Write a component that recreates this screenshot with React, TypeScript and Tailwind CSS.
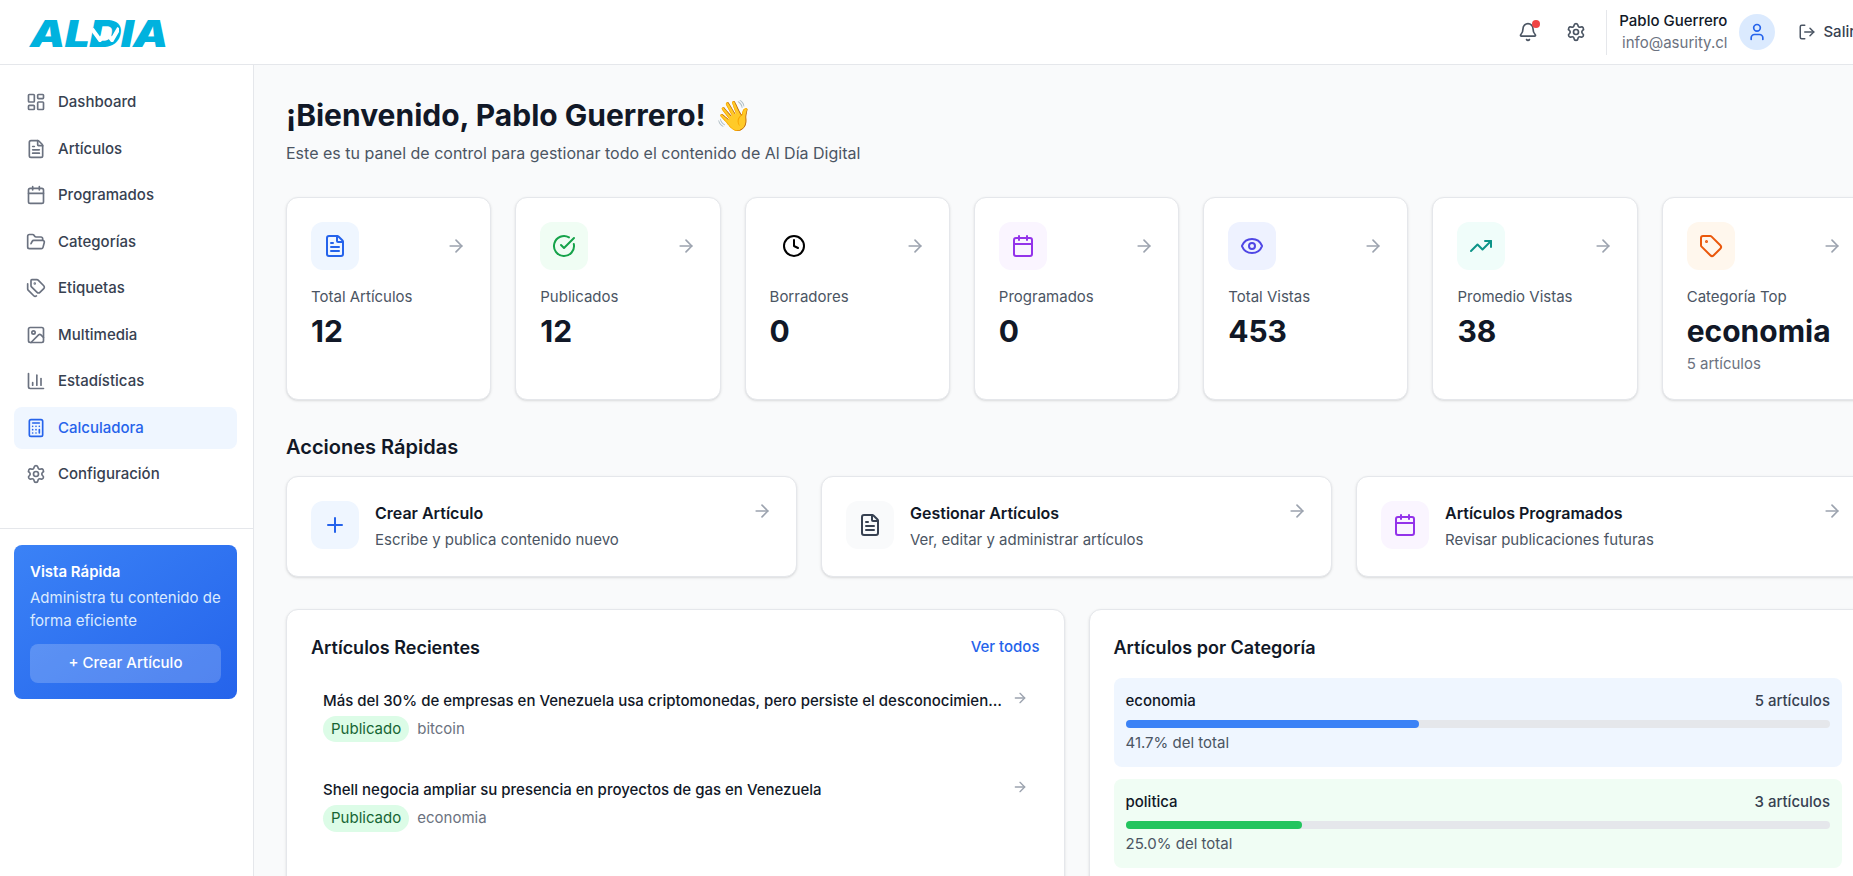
import {
  ArrowRight,
  Bell,
  Calculator,
  Calendar,
  ChartColumn,
  CircleCheckBig,
  Clock,
  Eye,
  FileText,
  FolderOpen,
  Image,
  LayoutDashboard,
  LogOut,
  Plus,
  Settings,
  Tag,
  Tags,
  TrendingUp,
  User,
} from "lucide-react";

const navItems = [
  { icon: LayoutDashboard, label: "Dashboard" },
  { icon: FileText, label: "Artículos" },
  { icon: Calendar, label: "Programados" },
  { icon: FolderOpen, label: "Categorías" },
  { icon: Tags, label: "Etiquetas" },
  { icon: Image, label: "Multimedia" },
  { icon: ChartColumn, label: "Estadísticas" },
  { icon: Calculator, label: "Calculadora", active: true },
  { icon: Settings, label: "Configuración" },
];

const stats = [
  { icon: FileText, box: "bg-[#eff6ff]", color: "text-[#2563eb]", label: "Total Artículos", value: "12" },
  { icon: CircleCheckBig, box: "bg-[#f0fdf4]", color: "text-[#16a34a]", label: "Publicados", value: "12" },
  { icon: Clock, box: "", color: "text-black", label: "Borradores", value: "0" },
  { icon: Calendar, box: "bg-[#faf5ff]", color: "text-[#9333ea]", label: "Programados", value: "0" },
  { icon: Eye, box: "bg-[#eef2ff]", color: "text-[#4f46e5]", label: "Total Vistas", value: "453" },
  { icon: TrendingUp, box: "bg-[#f0fdfa]", color: "text-[#0d9488]", label: "Promedio Vistas", value: "38" },
  { icon: Tag, box: "bg-[#fff7ed]", color: "text-[#ea580c]", label: "Categoría Top", value: "economia", sub: "5 artículos" },
];

const actions = [
  { icon: Plus, box: "bg-[#eff6ff]", color: "text-[#2563eb]", title: "Crear Artículo", text: "Escribe y publica contenido nuevo" },
  { icon: FileText, box: "bg-[#f9fafb]", color: "text-[#374151]", title: "Gestionar Artículos", text: "Ver, editar y administrar artículos" },
  { icon: Calendar, box: "bg-[#faf5ff]", color: "text-[#9333ea]", title: "Artículos Programados", text: "Revisar publicaciones futuras" },
];

const recent = [
  { title: "Más del 30% de empresas en Venezuela usa criptomonedas, pero persiste el desconocimiento sobre su uso real", tag: "bitcoin" },
  { title: "Shell negocia ampliar su presencia en proyectos de gas en Venezuela", tag: "economia" },
];

const categories = [
  { name: "economia", count: "5 artículos", pct: 41.7, box: "bg-[#eff6ff]", bar: "bg-[#3b82f6]" },
  { name: "politica", count: "3 artículos", pct: 25.0, box: "bg-[#f0fdf4]", bar: "bg-[#22c55e]" },
];

function Logo() {
  return (
    <div className="relative mt-[2px] h-[37px] w-[137px] text-[37px] leading-none font-black italic tracking-[-0.5px] text-[#00b2de] select-none">
      <span className="inline-block origin-left scale-x-[1.2]">ALDIA</span>
      <svg viewBox="0 0 28 16" className="absolute left-[61px] top-[11px] h-[16px] w-[28px]" fill="none">
        <path d="M1 3 L9 14 L15 6 L21 14 L28 2" stroke="#fff" strokeWidth="4" />
      </svg>
    </div>
  );
}

function Header() {
  return (
    <header className="flex h-[65px] shrink-0 items-center justify-between border-b border-[#e5e7eb] bg-white pr-8 pl-[30px]">
      <Logo />
      <div className="flex items-center gap-3">
        <button className="relative p-2 text-[#4b5563]">
          <Bell size={20} />
          <span className="absolute top-[6px] right-[6px] h-2 w-2 rounded-full bg-[#ef4444]" />
        </button>
        <button className="p-2 text-[#4b5563]">
          <Settings size={20} />
        </button>
        <div className="flex items-center gap-3 border-l border-[#e5e7eb] pl-3">
          <div className="text-right">
            <div className="text-[15px] font-medium text-[#111827]">Pablo Guerrero</div>
            <div className="text-[15px] text-[#6b7280]">info@asurity.cl</div>
          </div>
          <div className="flex h-9 w-9 items-center justify-center rounded-full bg-[#dbeafe] text-[#2563eb]">
            <User size={20} />
          </div>
        </div>
        <button className="flex items-center gap-[7px] py-2 pr-3 pl-[11px] text-[15px] font-medium text-[#374151]">
          <LogOut size={18} className="text-[#4b5563]" />
          Salir
        </button>
      </div>
    </header>
  );
}

function Sidebar() {
  return (
    <aside className="w-[254px] shrink-0 border-r border-[#e5e7eb] bg-white">
      <nav className="flex flex-col gap-1 border-b border-[#e5e7eb] pt-4 pr-4 pb-8 pl-3.5">
        {navItems.map((item) => (
          <a
            key={item.label}
            className={
              item.active
                ? "flex items-center gap-3 rounded-lg bg-[#eff6ff] px-3 py-2.5 text-[15px] font-medium text-[#2563eb]"
                : "flex items-center gap-3 rounded-lg px-3 py-2.5 text-[15px] font-medium text-[#374151]"
            }
          >
            <item.icon size={20} className={item.active ? "text-[#2563eb]" : "text-[#6b7280]"} />
            {item.label}
          </a>
        ))}
      </nav>
      <div className="pt-4 pr-4 pl-3.5">
        <div className="rounded-lg bg-gradient-to-br from-[#3b82f6] to-[#2563eb] p-4 text-white">
          <h3 className="text-[15px] font-semibold">Vista Rápida</h3>
          <p className="mt-1 text-[15px] text-[#dbeafe]">Administra tu contenido de forma eficiente</p>
          <button className="mt-3 w-full rounded-lg bg-white/20 py-2 text-[15px] font-medium">+ Crear Artículo</button>
        </div>
      </div>
    </aside>
  );
}

export default function App() {
  return (
    <div className="h-screen w-screen overflow-hidden">
      <div className="flex h-full w-[1899px] flex-col bg-[#f9fafb] font-['Inter',sans-serif]">
        <Header />
        <div className="flex min-h-0 flex-1">
          <Sidebar />
          <main className="min-w-0 flex-1 overflow-hidden p-8">
            <h1 className="text-3xl font-bold text-[#111827]">
              ¡Bienvenido, Pablo Guerrero! <span className="ml-[2px]">👋</span>
            </h1>
            <p className="mt-2 text-base text-[#4b5563]">Este es tu panel de control para gestionar todo el contenido de Al Día Digital</p>

            <div className="mt-8 grid grid-cols-7 gap-6">
              {stats.map((s) => (
                <div key={s.label} className="rounded-xl border border-[#e5e7eb] bg-white p-6 shadow-sm">
                  <div className="mb-4 flex items-center justify-between">
                    <div className={`flex h-12 w-12 items-center justify-center rounded-xl ${s.box}`}>
                      <s.icon size={24} className={s.color} />
                    </div>
                    <ArrowRight size={20} className="text-[#9ca3af]" />
                  </div>
                  <div className="text-[15px] text-[#4b5563]">{s.label}</div>
                  <div className="mt-1 text-3xl font-bold text-[#111827]">{s.value}</div>
                  {s.sub && <div className="mt-1 text-[15px] text-[#6b7280]">{s.sub}</div>}
                </div>
              ))}
            </div>

            <h2 className="mt-8 mb-3.5 text-xl leading-[30px] font-semibold text-[#111827]">Acciones Rápidas</h2>
            <div className="grid grid-cols-3 gap-6">
              {actions.map((a) => (
                <div key={a.title} className="flex items-start gap-4 rounded-xl border border-[#e5e7eb] bg-white p-6 shadow-sm">
                  <div className={`flex h-12 w-12 shrink-0 items-center justify-center rounded-xl ${a.box}`}>
                    <a.icon size={24} className={a.color} />
                  </div>
                  <div className="flex-1">
                    <div className="text-base font-semibold text-[#111827]">{a.title}</div>
                    <div className="mt-1 text-[15px] text-[#4b5563]">{a.text}</div>
                  </div>
                  <ArrowRight size={20} className="text-[#9ca3af]" />
                </div>
              ))}
            </div>

            <div className="mt-8 grid grid-cols-2 gap-6">
              <section className="rounded-xl border border-[#e5e7eb] bg-white p-6 shadow-sm">
                <div className="mb-4 flex items-center justify-between">
                  <h3 className="text-lg font-semibold text-[#111827]">Artículos Recientes</h3>
                  <a className="text-[15px] font-medium text-[#2563eb]">Ver todos</a>
                </div>
                <div className="flex flex-col gap-[13px]">
                  {recent.map((r) => (
                    <div key={r.tag} className="flex items-start gap-2 p-3">
                      <div className="min-w-0 flex-1">
                        <div className="truncate text-[15px] font-medium text-[#111827]">{r.title}</div>
                        <div className="mt-[3.5px] flex items-center gap-2">
                          <span className="rounded-full bg-[#dcfce7] px-2 py-0.5 text-[15px] text-[#166534]">Publicado</span>
                          <span className="text-[15px] text-[#6b7280]">{r.tag}</span>
                        </div>
                      </div>
                      <ArrowRight size={16} className="shrink-0 text-[#9ca3af]" />
                    </div>
                  ))}
                </div>
              </section>
              <section className="rounded-xl border border-[#e5e7eb] bg-white p-6 shadow-sm">
                <h3 className="mb-4 text-lg font-semibold text-[#111827]">Artículos por Categoría</h3>
                <div className="flex flex-col gap-3">
                  {categories.map((c) => (
                    <div key={c.name} className={`rounded-lg p-3 ${c.box}`}>
                      <div className="mb-2 flex items-center justify-between text-[15px] font-medium">
                        <span className="text-[#111827]">{c.name}</span>
                        <span className="text-[#374151]">{c.count}</span>
                      </div>
                      <div className="h-2 rounded-full bg-[#e5e7eb]">
                        <div className={`h-2 rounded-full ${c.bar}`} style={{ width: `${c.pct}%` }} />
                      </div>
                      <div className="mt-1 text-[15px] text-[#4b5563]">{c.pct.toFixed(1)}% del total</div>
                    </div>
                  ))}
                </div>
              </section>
            </div>
          </main>
        </div>
      </div>
    </div>
  );
}
